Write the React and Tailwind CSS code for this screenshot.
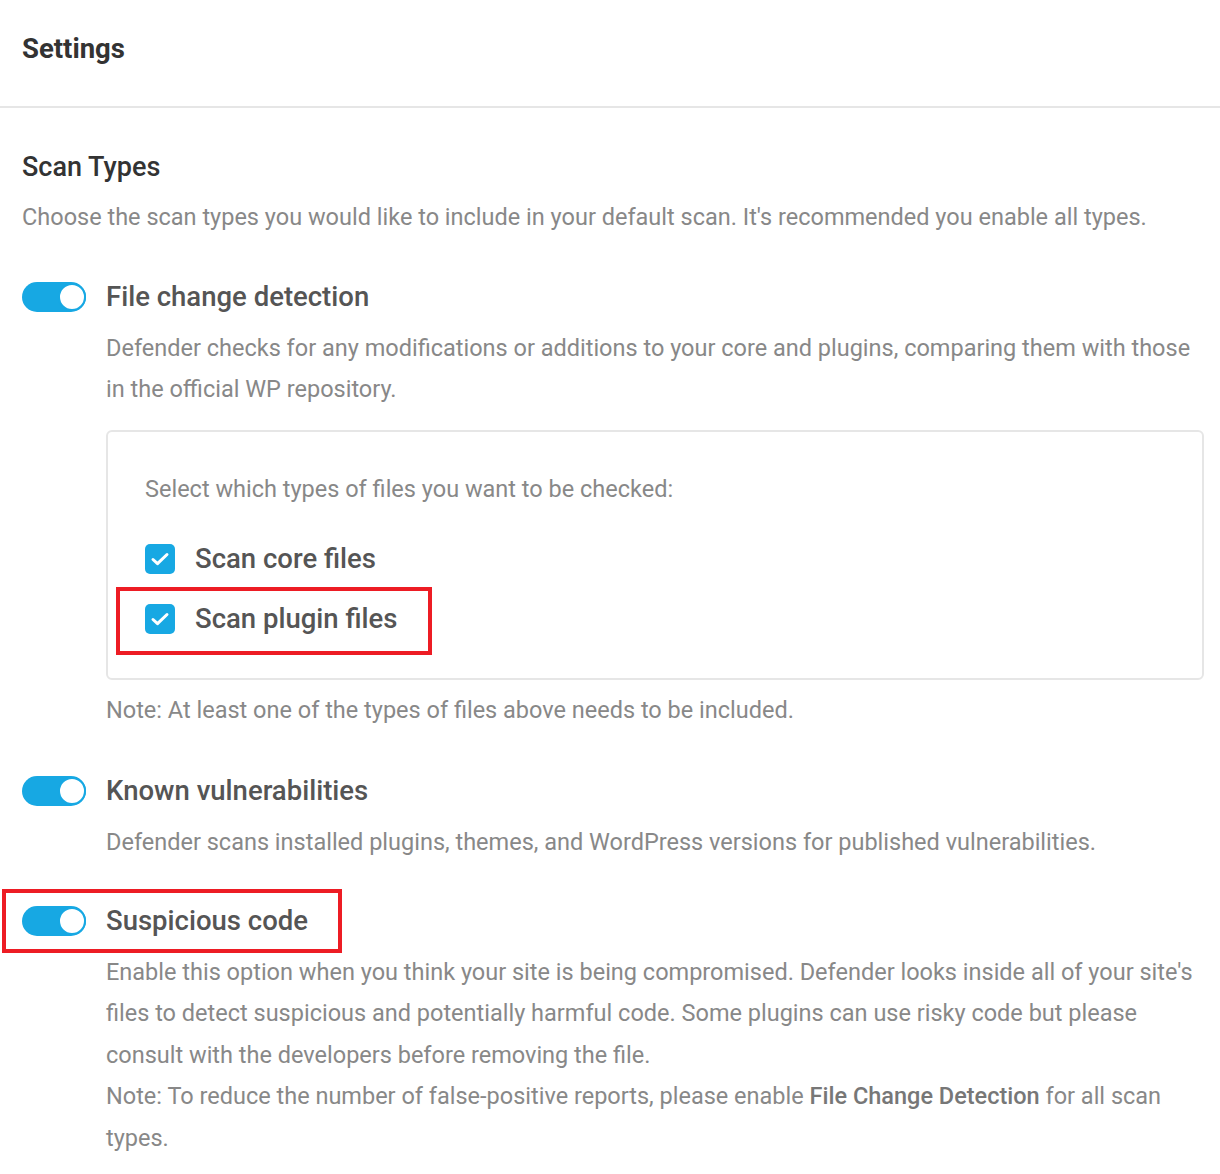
import React from "react";

const font = { fontFamily: "Roboto, 'Noto Sans', sans-serif" };

function Toggle() {
  return (
    <div className="relative h-[30px] w-[64px] shrink-0 rounded-full bg-[#17a8e3]">
      <div className="absolute right-0 top-[1px] h-[28px] w-[28px] rounded-full border-2 border-[#17a8e3] bg-white" />
    </div>
  );
}

function Checkbox() {
  return (
    <div className="h-[30px] w-[30px] shrink-0 rounded-[5px] bg-[#17a8e3]">
      <svg width="30" height="30" viewBox="0 0 30 30" fill="none">
        <path d="M8 15.5l4.5 4.2L22 10.5" stroke="white" strokeWidth="3" strokeLinecap="round" strokeLinejoin="round" />
      </svg>
    </div>
  );
}

function Desc({ children, className = "" }) {
  return <p className={`text-[23.5px] leading-[41.5px] text-[#888888] ${className}`}>{children}</p>;
}

export default function App() {
  return (
    <div className="min-h-[1174px] w-[1220px] bg-white" style={font}>
      <div className="flex h-[108px] items-center border-b-2 border-[#e6e6e6] px-[22px] pb-[8px]">
        <h1 className="text-[27.5px] font-bold text-[#333333]">Settings</h1>
      </div>

      <div className="pl-[22px] pr-[16px]">
        <h2 className="mt-[43px] text-[27px] font-medium leading-[32px] text-[#333333]">Scan Types</h2>
        <Desc className="mt-[14px]">
          Choose the scan types you would like to include in your default scan. It's recommended you enable all types.
        </Desc>

        {/* File change detection */}
        <div className="mt-[43px] flex h-[30px] items-center gap-[20px]">
          <Toggle />
          <span className="text-[27.5px] font-medium text-[#555555]">File change detection</span>
        </div>
        <div className="ml-[84px]">
          <Desc className="mt-[16px]">
            Defender checks for any modifications or additions to your core and plugins, comparing them with those in the official WP repository.
          </Desc>

          <div className="mt-[19px] h-[250px] rounded-[6px] border-2 border-[#e6e6e6] px-[37px] pt-[37px]">
            <Desc>Select which types of files you want to be checked:</Desc>
            <div className="mt-[19px] flex h-[60px] items-center gap-[20px]">
              <Checkbox />
              <span className="text-[27.5px] font-medium text-[#555555]">Scan core files</span>
            </div>
            <div className="relative flex h-[60px] items-center gap-[20px]">
              <Checkbox />
              <span className="text-[27.5px] font-medium text-[#555555]">Scan plugin files</span>
              <div className="pointer-events-none absolute left-[-29px] top-[-2px] h-[68px] w-[316px] border-4 border-[#ed1c24]" />
            </div>
          </div>

          <Desc className="mt-[10px]">Note: At least one of the types of files above needs to be included.</Desc>
        </div>

        {/* Known vulnerabilities */}
        <div className="mt-[45px] flex h-[30px] items-center gap-[20px]">
          <Toggle />
          <span className="text-[27.5px] font-medium text-[#555555]">Known vulnerabilities</span>
        </div>
        <div className="ml-[84px]">
          <Desc className="mt-[16px]">
            Defender scans installed plugins, themes, and WordPress versions for published vulnerabilities.
          </Desc>
        </div>

        {/* Suspicious code */}
        <div className="relative mt-[42px] flex h-[30px] items-center gap-[20px]">
          <Toggle />
          <span className="text-[27.5px] font-medium text-[#555555]">Suspicious code</span>
          <div className="pointer-events-none absolute left-[-20px] top-[-17px] h-[64px] w-[340px] border-4 border-[#ed1c24]" />
        </div>
        <div className="ml-[84px]">
          <Desc className="mt-[16px]">
            Enable this option when you think your site is being compromised. Defender looks inside all of your site's files to detect suspicious and potentially harmful code. Some plugins can use risky code but please consult with the developers before removing the file.
            <br />
            Note: To reduce the number of false-positive reports, please enable{" "}
            <span className="font-medium text-[#777777]">File Change Detection</span> for all scan types.
          </Desc>
        </div>
      </div>
    </div>
  );
}
